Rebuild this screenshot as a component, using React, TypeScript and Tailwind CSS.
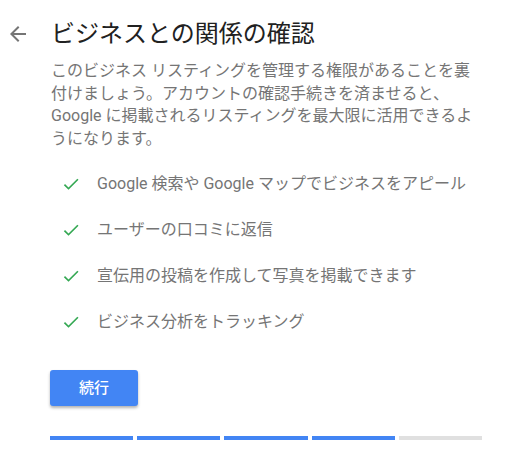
const benefits = [
    'Google 検索や Google マップでビジネスをアピール',
    'ユーザーの口コミに返信',
    '宣伝用の投稿を作成して写真を掲載できます',
    'ビジネス分析をトラッキング',
];

const steps = [true, true, true, true, false];

export default function App() {
    return (
        <div
            className="min-h-[465px] w-[518px] bg-white pl-[10px] pt-[18px]"
            style={{ fontFamily: "Roboto, 'Noto Sans CJK JP', sans-serif" }}
        >
            <div className="flex items-center">
                <svg width="16" height="16" viewBox="0 0 16 16" className="text-[#757575]">
                    <path d="M16 7H3.83l5.59-5.59L8 0 0 8l8 8 1.41-1.41L3.83 9H16z" fill="currentColor" />
                </svg>
                <h1 className="ml-[25px] text-[24px] leading-[32px] text-[#212121]">ビジネスとの関係の確認</h1>
            </div>

            <div className="ml-[41px] pr-[40px]">
                <p className="mt-[10px] text-[16px] leading-[22.5px] text-[#757575]">
                    このビジネス リスティングを管理する権限があることを裏付けましょう。アカウントの確認手続きを済ませると、Google に掲載されるリスティングを最大限に活用できるようになります。
                </p>

                <ul className="mt-[22px] flex flex-col gap-[22px]">
                    {benefits.map((b) => (
                        <li key={b} className="flex items-center">
                            <svg width="20" height="20" viewBox="0 0 24 24" className="ml-[10px] text-[#34a853]">
                                <path d="M9 16.17L4.83 12l-1.42 1.41L9 19 21 7l-1.41-1.41z" fill="currentColor" />
                            </svg>
                            <span className="ml-[16px] text-[16px] leading-[24px] text-[#757575]">{b}</span>
                        </li>
                    ))}
                </ul>

                <button className="-ml-[1px] mt-[36px] h-[36px] w-[88px] rounded-[3px] bg-[#4285f4] text-[15px] font-medium text-white shadow-[0_2px_3px_rgba(0,0,0,0.3)]">
                    続行
                </button>

                <div className="-ml-[1px] mt-[30px] flex w-[432px] gap-[4px]">
                    {steps.map((done, i) => (
                        <div key={i} className={done ? 'h-[4px] flex-1 bg-[#4285f4]' : 'h-[4px] flex-1 bg-[#e0e0e0]'} />
                    ))}
                </div>
            </div>
        </div>
    );
}
